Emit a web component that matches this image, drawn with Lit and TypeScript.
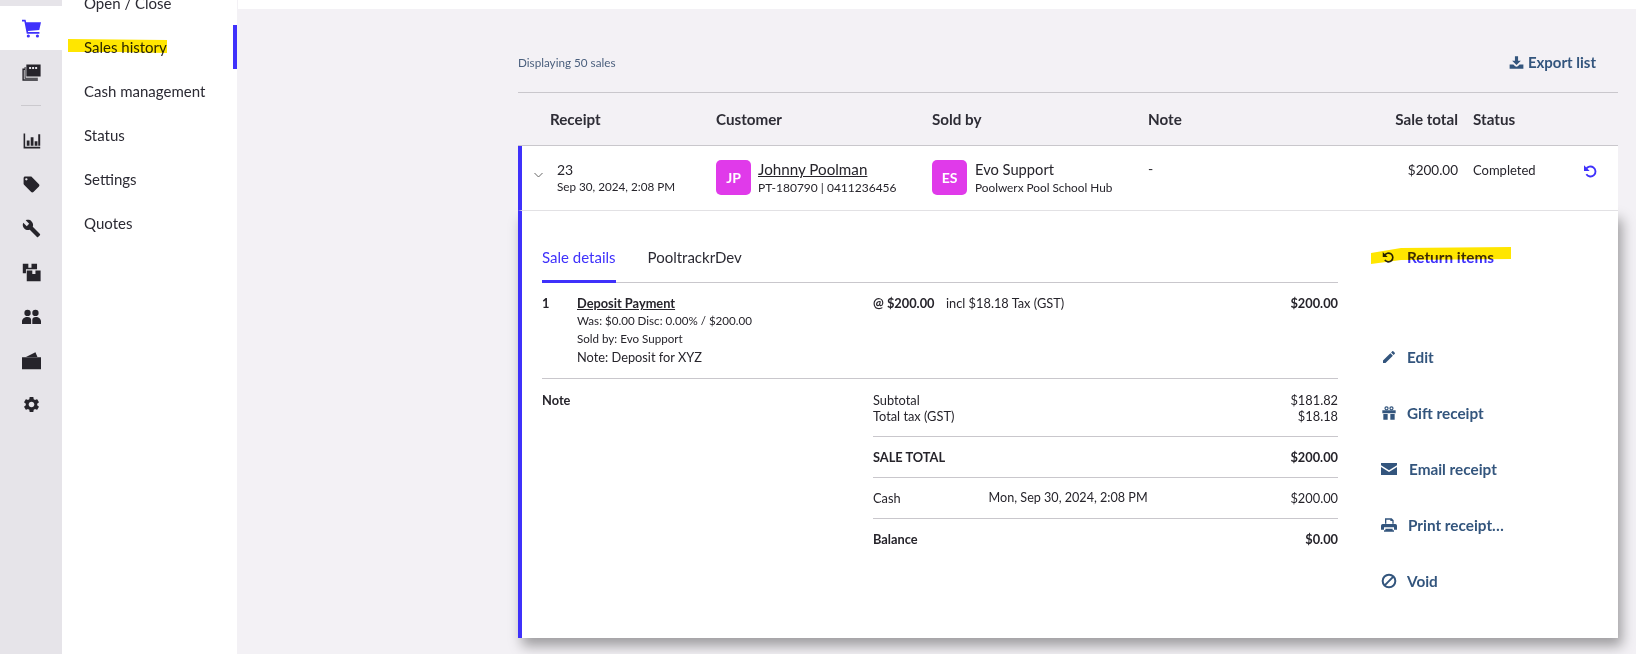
import { LitElement, html, css, svg } from "lit";
import { customElement } from "lit/decorators.js";

const P = (d: string) => svg`<path d=${d}></path>`;
const railIcons = [
  svg`<path d="M0 1h4.500l.8 3H24l-2.200 10L7.500 15l.3 1.500H22v2.200H6L3 3.200H0z"></path><circle cx="8" cy="21.500" r="2"></circle><circle cx="19.500" cy="21.500" r="2"></circle>`,
  P("M5.500 2H23.500v15H5.500zM9 5v2.500h2.500V5zM12.800 5v2.500h2.500V5zM16.600 5v2.500h2.500V5zM.5 7h3.500v1.800H2.300v11.700H20v1.800H.5zM3.300 5h1.200v13.500H20V20H3.300z"),
  null,
  P("M2 3h2v17h19v2H2zM6 12h3.500v6.500H6zM11 8h3.500v10.500H11zM16 13h3.500v5.500H16zM20.500 4H23v14.500h-2.500z"),
  P("M21.410 11.580l-9-9C12.050 2.220 11.550 2 11 2H4c-1.100 0-2 .9-2 2v7c0 .55.22 1.050.59 1.420l9 9c.36.36.86.58 1.410.58s1.050-.22 1.410-.59l7-7c.37-.36.59-.86.59-1.410s-.23-1.060-.59-1.420zM5.500 7C4.670 7 4 6.330 4 5.500S4.670 4 5.500 4 7 4.670 7 5.500 6.330 7 5.500 7z"),
  P("M22.700 19l-9.100-9.100c.9-2.300.4-5-1.500-6.900-2-2-5-2.400-7.400-1.300L9 6 6 9 1.600 4.700C.4 7.100.9 10.100 2.900 12.100c1.900 1.900 4.600 2.400 6.900 1.500l9.100 9.100c.4.4 1 .4 1.400 0l2.300-2.300c.5-.4.5-1.100.1-1.400z"),
  P("M1 1h7v5h4V1h7v7H5v5H1zM6 9.500h7V14h4V9.500h6.500V23H6z"),
  P("M7 3.500a4 4 0 1 1 0 8 4 4 0 0 1 0-8zM17 3.500a4 4 0 1 1 0 8 4 4 0 0 1 0-8zM0 21.500V18c0-3 3-5.500 7-5.500 3 0 4.500 1.500 4.500 4v5zM13 21.500v-5c0-2.500 1.500-4 4.500-4 3.700 0 6.500 2.500 6.500 5.500v3.500z"),
  P("M5 7.500 17 1.500l2.500 6zM0 8h24v15H0z"),
  P("M19.140 12.940c.04-.3.06-.61.06-.94 0-.32-.02-.64-.07-.94l2.030-1.580c.18-.14.23-.41.12-.61l-1.920-3.320c-.12-.22-.37-.29-.59-.22l-2.390.96c-.5-.38-1.030-.7-1.620-.94l-.36-2.540c-.04-.24-.24-.41-.48-.41h-3.840c-.24 0-.43.17-.47.41l-.36 2.540c-.59.24-1.130.57-1.620.94l-2.390-.96c-.22-.08-.47 0-.59.22L2.740 8.870c-.12.21-.08.47.12.61l2.030 1.580c-.05.3-.09.63-.09.94s.02.64.07.94l-2.030 1.580c-.18.14-.23.41-.12.61l1.920 3.320c.12.22.37.29.59.22l2.390-.96c.5.38 1.030.7 1.620.94l.36 2.540c.05.24.24.41.48.41h3.840c.24 0 .44-.17.47-.41l.36-2.540c.59-.24 1.130-.56 1.620-.94l2.390.96c.22.08.47 0 .59-.22l1.920-3.320c.12-.22.07-.47-.12-.61l-2.010-1.580zM12 15.600c-1.980 0-3.600-1.620-3.600-3.600s1.620-3.600 3.600-3.600 3.600 1.620 3.600 3.600-1.620 3.600-3.600 3.600z"),
];

const undo = svg`<path d="M6 9.500A7.500 7.500 0 1 1 6.500 17" fill="none" stroke="currentColor" stroke-width="2.800"></path><path d="M3 3.500v8.500h8.500z"></path>`;
const icons: Record<string, unknown> = {
  undo,
  download: P("M9.500 2h5v7H19l-7 7-7-7h4.500zM1 15h6l2.500 2.500a3.500 3.500 0 0 0 5 0L17 15h6v7H1z"),
  edit: P("M3 17.250V21h3.750L17.810 9.940l-3.750-3.750L3 17.250zM20.710 7.040c.39-.39.39-1.020 0-1.410l-2.340-2.340c-.39-.39-1.020-.39-1.410 0l-1.830 1.830 3.750 3.750 1.830-1.830z"),
  gift: svg`<circle cx="8.300" cy="5" r="2.300" fill="none" stroke="currentColor" stroke-width="1.800"></circle><circle cx="15.700" cy="5" r="2.300" fill="none" stroke="currentColor" stroke-width="1.800"></circle><path d="M2 8h20v4.500H2zM3.500 13.500h6.500V22H3.500zM14 13.500h6.500V22H14z"></path>`,
  mail: P("M0 3h24v3.500L12 14 0 6.500zM0 9l12 7.500L24 9v12H0z"),
  print: P("M6 2h10l3 3v5h-2V6h-3V4H8v6H6zM2.500 10.500h19A2.500 2.500 0 0 1 24 13v6h-4.500v-3.500h-15V19H0v-6a2.500 2.500 0 0 1 2.500-2.500zM6.500 17.500h11V20h-11zM4.500 20h15v2h-15z"),
  void: svg`<circle cx="12" cy="12" r="9.500" fill="none" stroke="currentColor" stroke-width="3"></circle><path d="M5.500 18.500 18.500 5.500" stroke="currentColor" stroke-width="3"></path>`,
};
const icon = (n: string) => html`<svg class="ic" viewBox="0 0 24 24" fill="currentColor">${icons[n]}</svg>`;

const nav = ["Open / Close", "Sales history", "Cash management", "Status", "Settings", "Quotes"];
const actions = [
  { i: "undo", t: "Return items", cls: "ret" },
  { i: "edit", t: "Edit", cls: "" },
  { i: "gift", t: "Gift receipt", cls: "" },
  { i: "mail", t: "Email receipt", cls: "wide" },
  { i: "print", t: "Print receipt…", cls: "mid" },
  { i: "void", t: "Void", cls: "" },
];

@customElement("app-root")
export class AppRoot extends LitElement {
  static styles = css`
    :host {
      display: flex;
      height: 654px;
      overflow: hidden;
      background: #f3f1f5;
      color: #26242b;
      font-family: Lato, "Liberation Sans", sans-serif;
      font-size: 14px;
    }
    .rail { width: 62px; flex: none; background: #e6e4e9; padding-top: 6px; box-sizing: border-box; }
    .rail-i { height: 44px; display: flex; align-items: center; justify-content: center; }
    .rail-i svg { width: 19px; height: 19px; fill: #26242b; }
    .rail-i.on { background: #fff; }
    .rail-i.on svg { fill: #3f31fb; }
    .rail-sep { height: 1px; width: 20px; background: #cbc9ce; margin: 11px auto 12px; }
    .sub { width: 175px; flex: none; background: #fff; }
    .sub-list { margin-top: -19px; }
    .sub-i { position: relative; height: 44px; display: flex; align-items: center; padding-left: 22px; font-size: 15px; color: #2b2a33; box-sizing: border-box; }
    .sub-i.on { border-right: 4px solid #3f31fb; }
    .hl { position: absolute; mix-blend-mode: multiply; pointer-events: none; fill: #ffe600; }
    .hl-nav { left: 6px; top: 14px; width: 99px; height: 15px; }
    .hl-ret { left: -10px; top: 2px; width: 140px; height: 17px; }
    .main { flex: 1; min-width: 0; }
    .topbar { height: 9px; background: #fff; margin-left: 1px; }
    .content { margin: 0 18px 0 281px; }
    .toolbar { height: 84px; display: flex; align-items: center; justify-content: space-between; border-bottom: 1px solid #c9c7cc; padding-top: 23px; box-sizing: border-box; }
    .count { font-size: 11.700px; color: #4a5f7d; }
    .export { display: flex; align-items: center; gap: 4px; color: #33557d; font-size: 15px; font-weight: 700; margin-right: 22px; }
    .export .ic { width: 15px; height: 15px; }
    .ic { width: 16px; height: 16px; flex: none; display: block; }
    .thead, .row { display: grid; }
    .thead { grid-template-columns: 166px 216px 216px 1fr 100px 160px; padding: 0 0 1px 32px; height: 53px; align-items: center; border-bottom: 1px solid #c9c7cc; box-sizing: border-box; font-size: 15.200px; font-weight: 700; color: #2e2d36; }
    .right { text-align: right; }
    .status { padding-left: 15px; }
    .row { position: relative; z-index: 2; grid-template-columns: 35px 159px 216px 216px 1fr 100px 160px; background: #fff; height: 65px; border-left: 4px solid #3f31fb; border-bottom: 1px solid #e2e1e4; box-sizing: border-box; padding-top: 14px; }
    .chev { width: 9px; height: 6px; margin: 12px 0 0 12px; fill: none; stroke: #666; stroke-width: 1; }
    .big { font-size: 14px; line-height: 20px; }
    .small { font-size: 12px; line-height: 15px; margin-top: 1px; }
    .rcpt .big { line-height: 18px; }
    .rcpt { padding-top: 1px; }
    .rcpt .small { font-size: 11.700px; margin-top: 0; }
    .who { display: flex; gap: 7px; }
    .who.seller { gap: 8px; }
    .who.seller .small { font-size: 11.800px; }
    .av { width: 35px; height: 35px; border-radius: 5px; background: #e03aea; color: #fff; font-weight: 700; font-size: 14px; display: flex; align-items: center; justify-content: center; flex: none; }
    .link { text-decoration: underline; }
    .name { font-size: 15.200px; line-height: 19px; }
    .seller .name { font-size: 14.700px; }
    .status-cell { display: flex; justify-content: space-between; padding: 2px 20px 0 15px; font-size: 13px; }
    .status-cell .ic { width: 16px; height: 16px; color: #3f31fb; margin-top: 1px; }
    .amt { text-align: right; font-size: 13.500px; line-height: 20px; }
    .note-c { line-height: 18px; }
    .panel { position: relative; z-index: 1; display: flex; background: #fff; border-left: 4px solid #3f31fb; box-shadow: 4px 8px 12px rgba(0,0,0,.35); height: 427px; box-sizing: border-box; }
    .left { width: 816px; padding-left: 20px; box-sizing: border-box; flex: none; }
    .tabs { display: flex; gap: 32px; height: 72px; box-sizing: border-box; padding-top: 34px; border-bottom: 1px solid #c9c7cc; font-size: 15px; }
    .tab { height: 38px; line-height: 24px; box-sizing: border-box; color: #2b2a33; }
    .tab.on { color: #3f31fb; border-bottom: 3px solid #3f31fb; }
    .item { display: grid; grid-template-columns: 35px 296px 73px 1fr auto; padding: 11px 0 12px; border-bottom: 1px solid #c9c7cc; line-height: 18px; font-size: 12.800px; }
    .b { font-weight: 700; }
    .sub-t { font-size: 11.600px; }
    .summary { display: flex; padding-top: 13px; font-size: 12.800px; }
    .note-h { width: 331px; font-weight: 700; line-height: 16px; flex: none; }
    .totals { flex: 1; }
    .t-row { display: flex; justify-content: space-between; line-height: 16px; }
    .t-block { padding: 12px 0; border-bottom: 1px solid #c9c7cc; }
    .t-block:first-child { padding-top: 0; }
    .t-block:last-child { border: none; }
    .t-date { flex: 1; padding-left: 88px; font-size: 12.600px; }
    .actions { padding-left: 43px; padding-top: 34px; display: flex; flex-direction: column; gap: 32px; }
    .act { position: relative; display: flex; align-items: center; gap: 10px; height: 24px; font-size: 15.300px; font-weight: 700; color: #33557d; }
    .act .ic { width: 16px; height: 16px; }
    .act.ret { color: #3f31fb; margin-bottom: 44px; }
    .act.ret .ic { color: #26242b; width: 14px; height: 14px; margin-right: 2px; }
    .act.wide { gap: 12px; }
    .act.mid { gap: 11px; }
  `;

  render() {
    return html`
      <aside class="rail">
        ${railIcons.map((d, i) =>
          d === null
            ? html`<div class="rail-sep"></div>`
            : html`<div class="rail-i ${i === 0 ? "on" : ""}"><svg viewBox="0 0 24 24">${d}</svg></div>`
        )}
      </aside>
      <nav class="sub">
        <div class="sub-list">
          ${nav.map(
            (n, i) => html`<div class="sub-i ${i === 1 ? "on" : ""}">
              ${i === 1 ? html`<svg class="hl hl-nav" viewBox="0 0 99 15" preserveAspectRatio="none"><polygon points="0,0 99,1 99,14 50,13 0,13"></polygon></svg>` : ""}
              ${n}
            </div>`
          )}
        </div>
      </nav>
      <main class="main">
        <div class="topbar"></div>
        <div class="content">
          <div class="toolbar">
            <span class="count">Displaying 50 sales</span>
            <span class="export">${icon("download")} Export list</span>
          </div>
          <div class="thead">
            <div>Receipt</div><div>Customer</div><div>Sold by</div><div>Note</div>
            <div class="right">Sale total</div><div class="status">Status</div>
          </div>
          <div class="row">
            <svg class="chev" viewBox="0 0 9 6"><path d="M.5 1 4.500 5 8.500 1"></path></svg>
            <div class="rcpt"><div class="big">23</div><div class="small">Sep 30, 2024, 2:08 PM</div></div>
            <div class="who"><div class="av">JP</div><div><div class="name link">Johnny Poolman</div><div class="small">PT-180790 | 0411236456</div></div></div>
            <div class="who seller"><div class="av">ES</div><div><div class="name">Evo Support</div><div class="small">Poolwerx Pool School Hub</div></div></div>
            <div class="note-c">-</div>
            <div class="amt">$200.00</div>
            <div class="status-cell"><span>Completed</span>${icon("undo")}</div>
          </div>
          <section class="panel">
            <div class="left">
              <div class="tabs"><div class="tab on">Sale details</div><div class="tab">PooltrackrDev</div></div>
              <div class="item">
                <div class="b">1</div>
                <div>
                  <div class="b link">Deposit Payment</div>
                  <div class="sub-t">Was: $0.00 Disc: 0.00% / $200.00</div>
                  <div class="sub-t">Sold by: Evo Support</div>
                  <div>Note: Deposit for XYZ</div>
                </div>
                <div class="b">@ $200.00</div>
                <div>incl $18.18 Tax (GST)</div>
                <div class="b">$200.00</div>
              </div>
              <div class="summary">
                <div class="note-h">Note</div>
                <div class="totals">
                  <div class="t-block">
                    <div class="t-row"><span>Subtotal</span><span>$181.82</span></div>
                    <div class="t-row"><span>Total tax (GST)</span><span>$18.18</span></div>
                  </div>
                  <div class="t-block b"><div class="t-row"><span>SALE TOTAL</span><span>$200.00</span></div></div>
                  <div class="t-block"><div class="t-row"><span>Cash</span><span class="t-date">Mon, Sep 30, 2024, 2:08 PM</span><span>$200.00</span></div></div>
                  <div class="t-block b"><div class="t-row"><span>Balance</span><span>$0.00</span></div></div>
                </div>
              </div>
            </div>
            <div class="actions">
              ${actions.map(
                (a) => html`<div class="act ${a.cls}">
                  ${a.cls === "ret" ? html`<svg class="hl hl-ret" viewBox="0 0 140 17" preserveAspectRatio="none"><polygon points="0,6 30,1 140,0 140,12 30,13 0,17"></polygon></svg>` : ""}
                  ${icon(a.i)}<span>${a.t}</span>
                </div>`
              )}
            </div>
          </section>
        </div>
      </main>
    `;
  }
}
